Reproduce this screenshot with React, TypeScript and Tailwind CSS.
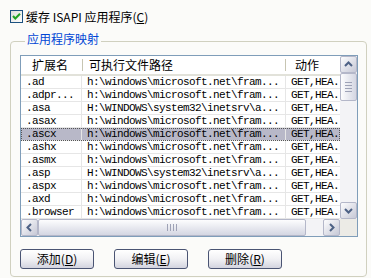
const FRAM = 'h:\\windows\\microsoft.net\\fram...';
const SYS = 'H:\\WINDOWS\\system32\\inetsrv\\a...';

const rows: { ext: string; path: string; sel?: boolean }[] = [
  { ext: '.ad', path: FRAM },
  { ext: '.adpr...', path: FRAM },
  { ext: '.asa', path: SYS },
  { ext: '.asax', path: FRAM },
  { ext: '.ascx', path: FRAM, sel: true },
  { ext: '.ashx', path: FRAM },
  { ext: '.asmx', path: FRAM },
  { ext: '.asp', path: SYS },
  { ext: '.aspx', path: FRAM },
  { ext: '.axd', path: FRAM },
  { ext: '.browser', path: FRAM },
];

const cjk = "font-['Noto_Sans_CJK_SC',sans-serif]";
const mono = "font-['Liberation_Mono','Noto_Sans_CJK_SC',monospace]";

function Arrow({ dir }: { dir: 'up' | 'down' | 'left' | 'right' }) {
  const pts = {
    up: '4,9 7.5,5.5 11,9',
    down: '4,6 7.5,9.5 11,6',
    left: '9,4 5.5,7.5 9,11',
    right: '6,4 9.5,7.5 6,11',
  }[dir];
  return (
    <svg width="15" height="15" viewBox="0 0 15 15">
      <polyline points={pts} fill="none" stroke="#4d6185" strokeWidth="2" />
    </svg>
  );
}

function ScrollBtn({ dir }: { dir: 'up' | 'down' | 'left' | 'right' }) {
  return (
    <div className="w-[17px] h-[17px] shrink-0 flex items-center justify-center rounded-[2px] border border-[#b4b7c9] bg-gradient-to-br from-[#fdfdfe] to-[#c6c8d6]">
      <Arrow dir={dir} />
    </div>
  );
}

function XpButton({ label, hot }: { label: string; hot: string }) {
  return (
    <button className={`w-[74px] h-[20px] rounded-[3px] border border-[#4a5473] bg-gradient-to-b from-[#ffffff] via-[#f1f1f4] to-[#d3d4df] text-[12px] leading-[14px] text-black ${cjk}`}>
      {label}(<span className="underline">{hot}</span>)
    </button>
  );
}

export default function App() {
  return (
    <div className={`w-[371px] h-[278px] overflow-hidden bg-[#fbfbf9] pt-[10px] px-[10px] text-black ${cjk}`}>
      <div className="flex items-center gap-[3px] h-[13px]">
        <svg width="13" height="13" viewBox="0 0 13 13">
          <defs>
            <linearGradient id="cb" x1="0" y1="0" x2="1" y2="1">
              <stop offset="0" stopColor="#dcdcd7" />
              <stop offset="1" stopColor="#ffffff" />
            </linearGradient>
          </defs>
          <rect x="0.5" y="0.5" width="12" height="12" fill="url(#cb)" stroke="#1c5180" />
          <polyline points="3,6 5.3,8.5 10,3.8" fill="none" stroke="#21a121" strokeWidth="2" />
        </svg>
        <span className="text-[12px] leading-[13px]">
          缓存 ISAPI 应用程序(<span className="underline">C</span>)
        </span>
      </div>

      <fieldset className="mt-[8px] w-[357px] h-[246px] border border-[#d0d0bf] rounded-[4px] pl-[9px]">
        <legend className="ml-[5px] px-[2px] pb-[4px] text-[12px] leading-[16px] text-[#0046d5]">应用程序映射</legend>

        <div className="mt-[4px] w-[338px] h-[182px] border border-[#7f9db9] bg-white flex flex-col">
          <div className="flex flex-1 min-h-0">
            <div className="flex-1 flex flex-col min-w-0 overflow-hidden">
              <div className="h-[20px] shrink-0 flex items-center border-b-2 border-[#e2e2da] bg-white text-[12px]">
                <div className="w-[61px] pl-[11px] h-full flex items-center relative">
                  扩展名
                  <span className="absolute right-[-1px] top-[3px] bottom-[3px] w-px bg-[#c7c5b2]" />
                </div>
                <div className="w-[204px] pl-[7px] h-full flex items-center relative">
                  可执行文件路径
                  <span className="absolute right-0 top-[3px] bottom-[3px] w-px bg-[#c7c5b2]" />
                </div>
                <div className="flex-1 pl-[9px] h-full flex items-center">动作</div>
              </div>
              {rows.map((r) => (
                <div
                  key={r.ext}
                  className={`h-[13px] shrink-0 flex text-[11px] leading-[12px] tracking-[-0.6px] ${mono} ${
                    r.sel ? 'bg-[#b8b8c8] outline-1 outline-dotted outline-[#555] -outline-offset-1' : ''
                  }`}
                >
                  <div className="w-[61px] pl-[5px] border-r border-b border-[#e6e6e6] whitespace-nowrap overflow-hidden">{r.ext}</div>
                  <div className="w-[204px] pl-[5px] border-r border-b border-[#e6e6e6] whitespace-nowrap overflow-hidden">{r.path}</div>
                  <div className="flex-1 pl-[5px] border-b border-[#e6e6e6] whitespace-nowrap">GET,HEA.</div>
                </div>
              ))}
            </div>
            <div className="w-[17px] shrink-0 flex flex-col bg-[#f3f3f6]">
              <ScrollBtn dir="up" />
              <div className="h-[28px] rounded-[2px] border border-[#b4b7c9] bg-gradient-to-r from-[#fdfdfe] to-[#d4d6e2] flex flex-col items-center justify-center gap-[2px]">
                <span className="w-[7px] h-px bg-[#9ea2b6]" />
                <span className="w-[7px] h-px bg-[#9ea2b6]" />
                <span className="w-[7px] h-px bg-[#9ea2b6]" />
                <span className="w-[7px] h-px bg-[#9ea2b6]" />
              </div>
              <div className="flex-1" />
              <ScrollBtn dir="down" />
            </div>
          </div>
          <div className="h-[17px] shrink-0 flex">
            <div className="flex-1 flex bg-[#f3f3f6]">
              <ScrollBtn dir="left" />
              <div className="w-[268px] rounded-[2px] border border-[#b4b7c9] bg-gradient-to-b from-[#fdfdfe] to-[#d4d6e2] flex items-center justify-center gap-[2px]">
                <span className="h-[7px] w-px bg-[#9ea2b6]" />
                <span className="h-[7px] w-px bg-[#9ea2b6]" />
                <span className="h-[7px] w-px bg-[#9ea2b6]" />
                <span className="h-[7px] w-px bg-[#9ea2b6]" />
              </div>
              <div className="flex-1" />
              <ScrollBtn dir="right" />
            </div>
            <div className="w-[17px] bg-[#ecebe6]" />
          </div>
        </div>

        <div className="mt-[12px] flex gap-[20px]">
          <XpButton label="添加" hot="D" />
          <XpButton label="编辑" hot="E" />
          <XpButton label="删除" hot="R" />
        </div>
      </fieldset>
    </div>
  );
}
